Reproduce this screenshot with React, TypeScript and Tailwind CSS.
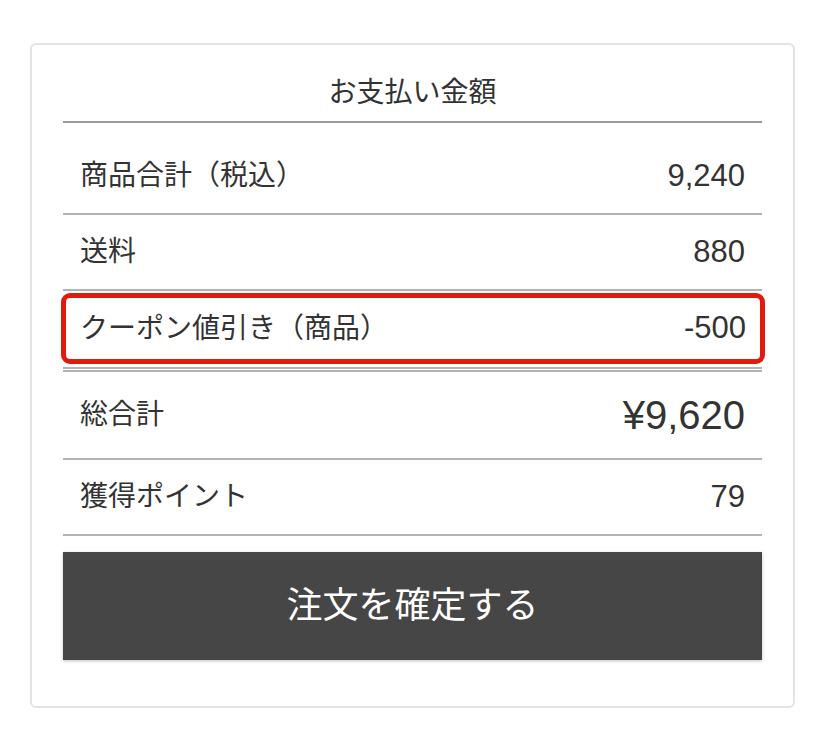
const font = "font-['Liberation_Sans','Noto_Sans_CJK_JP',sans-serif]";

function Row({ label, value, big = false }: { label: string; value: string; big?: boolean }) {
  return (
    <div className="flex h-full items-center justify-between px-[17px] text-[#333]">
      <span className="text-[28px]">{label}</span>
      <span className={big ? "text-[40px]" : "text-[31px]"}>{value}</span>
    </div>
  );
}

function Line() {
  return <div className="h-[2px] bg-[#b3b3b3]" />;
}

export default function App() {
  return (
    <div className={`min-h-screen bg-white pt-[43px] pl-[30px] ${font}`}>
      <div className="w-[765px] h-[665px] border-2 border-[#e3e3e3] rounded-[6px] px-[31px] pt-[28px]">
        {/* Title */}
        <div className="h-[40px] flex items-center justify-center text-[28px] text-[#333]">
          お支払い金額
        </div>
        <div className="mt-[8px] h-[2px] bg-[#999]" />

        <div className="h-[90px] pt-[16px]">
          <Row label="商品合計（税込）" value="9,240" />
        </div>
        <Line />

        <div className="h-[74px]">
          <Row label="送料" value="880" />
        </div>
        <Line />

        {/* coupon row, highlighted */}
        <div className="mt-[2px] h-[71px] -ml-[2px] -mr-[3px] border-[5px] border-[#e2190e] rounded-[9px]">
          <div className="h-full -mx-[3px]">
            <Row label="クーポン値引き（商品）" value="-500" />
          </div>
        </div>
        <div className="mt-[3px]">
          <Line />
        </div>
        <div className="mt-[1px]">
          <Line />
        </div>

        <div className="h-[86px]">
          <Row label="総合計" value="¥9,620" big />
        </div>
        <Line />

        <div className="h-[74px]">
          <Row label="獲得ポイント" value="79" />
        </div>
        <Line />

        <button className="mt-[16px] w-full h-[108px] bg-[#464646] text-white text-[36px] shadow-[0_1px_3px_rgba(0,0,0,0.25)]">
          注文を確定する
        </button>
      </div>
    </div>
  );
}
